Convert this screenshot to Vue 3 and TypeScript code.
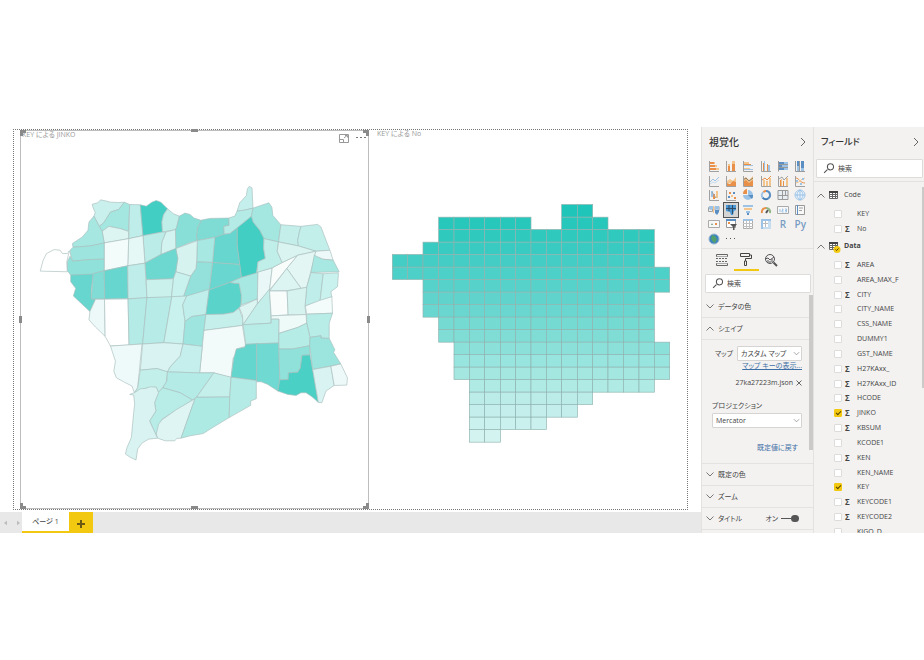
<script setup lang="ts">
import { reactive, ref } from 'vue'

type Shape = [d: string, fill: string, stroke?: string]
interface Field { name: string; sum: boolean; checked: boolean }

// Town areas of the shape map: fill colour and outline
const areas: [string, string][] = [
  ['#ffffff', '118,813 127,780 137,760 160,748 178,750 185,760 200,760 206,752 198,785 200,815'],
  ['#c9f0ec', '275,611 292,607 300,598 315,601 330,605 355,606 372,605 355,627 330,635 310,667 296,678 280,647 284,637 277,620'],
  ['#a4e7e0', '372,605 388,612 384,693 360,685 325,678 305,693 296,678 310,667 330,635 355,627'],
  ['#dcf5f3', '305,693 325,678 360,685 384,693 385,715 311,728'],
  ['#bfede9', '388,612 420,613 428,706 385,715'],
  ['#43cec4', '420,613 438,617 455,605 468,600 482,605 502,625 490,643 485,665 487,695 428,706'],
  ['#c0eee9', '502,625 520,640 538,647 530,680 526,688 487,695 485,665 490,643'],
  ['#88dfd8', '538,647 555,638 570,642 582,653 605,660 594,680 590,710 592,721 570,727 527,745 526,688 530,680'],
  ['#7fdcd4', '605,659 630,654 687,653 688,675 672,678 673,702 645,711 592,721 590,710 594,680'],
  ['#c5efec', '749,557 757,562 760,623 735,629 712,632 720,607 740,585 743,565'],
  ['#b5ebe6', '712,632 735,629 760,623 755,648 712,683 690,700 673,702 672,678 688,675 687,653 705,647'],
  ['#a4e7e0', '760,623 808,607 817,620 820,645 844,673 837,725 793,715 780,690 760,665 755,648'],
  ['#43cec4', '755,648 760,665 780,690 793,715 792,745 797,775 775,785 770,820 725,832 712,735 712,683'],
  ['#66d6ce', '645,711 673,702 690,700 712,683 712,735 720,793 638,787'],
  ['#a8e8e2', '592,721 645,711 638,787 590,785'],
  ['#69d7cf', '638,787 720,793 725,832 690,847 628,870'],
  ['#93e1da', '590,785 638,787 628,870 570,888 550,890 572,828 588,805'],
  ['#d6f3f0', '527,745 592,721 590,785 588,805 572,828 527,815 533,775'],
  ['#d3f3f0', '497,695 526,688 527,745 482,763 485,725'],
  ['#bbece7', '428,706 487,695 497,695 485,725 482,763 434,789'],
  ['#6dd8d0', '434,789 482,763 527,745 533,775 527,815 520,836 438,839'],
  ['#e6f8f6', '385,715 428,706 434,789 382,797'],
  ['#f4fcfb', '311,728 385,715 382,797 311,812'],
  ['#a7e7e2', '280,647 296,678 305,693 311,728 270,737 217,741 215,730 245,710 262,690 265,665'],
  ['#9de4de', '217,741 270,737 311,728 311,777 270,778 215,783 210,765 208,750'],
  ['#90e1da', '208,768 215,783 270,778 311,777 311,812 265,825 210,825 200,812 200,785'],
  ['#66d6ce', '210,825 278,822 272,870 272,897 285,898 268,935 218,888 225,865 210,845'],
  ['#80dcd5', '278,820 311,812 313,897 272,897'],
  ['#66d6ce', '311,812 382,797 383,896 313,897'],
  ['#bfede9', '382,797 434,789 440,894 383,896'],
  ['#cbf1ed', '438,839 520,836 514,892 440,894'],
  ['#c9f1ed', '527,815 572,828 550,890 514,892 520,836'],
  ['#ecf9f8', '285,898 312,898 314,1010 285,982 265,960 268,935'],
  ['#ffffff', '312,898 383,897 386,1036 330,1039 314,1010'],
  ['#b4ebe6', '383,897 440,893 427,1033 386,1035'],
  ['#b7ebe7', '440,893 515,890 491,1029 427,1033'],
  ['#c9f1ed', '515,890 560,888 548,915 555,965 549,1033 491,1029'],
  ['#c0eeea', '560,888 628,868 618,944 575,950 555,965 548,915'],
  ['#9ee5df', '555,965 575,950 618,944 612,992 607,1040 549,1033'],
  ['#5ad3ca', '628,870 690,847 705,850 718,850 725,885 723,920 700,938 670,943 618,944'],
  ['#a8e8e2', '690,847 725,832 775,817 773,897 725,915 725,885 718,850 705,850'],
  ['#c5efeb', '618,944 670,943 700,938 718,925 730,960 728,977 612,992'],
  ['#e9f8f7', '775,815 818,803 810,870 773,912'],
  ['#ddf5f2', '718,922 773,897 773,912 730,975 728,945'],
  ['#c3eeea', '810,867 815,970 730,975 773,912'],
  ['#f8fdfc', '818,803 848,787 895,765 862,805 810,870'],
  ['#c0eee9', '793,715 837,725 833,753 848,787 818,803 772,817 775,785 797,775 792,745'],
  ['#c3eeea', '844,673 905,678 900,695 895,720 897,737 837,725'],
  ['#c3efeb', '905,678 955,672 965,680 992,750 950,753 897,737 895,720 900,695'],
  ['#daf4f1', '837,725 897,737 950,753 895,765 848,787 833,753'],
  ['#e3f6f4', '895,765 950,753 945,775 922,862 905,865 862,805'],
  ['#edf9f8', '950,753 992,750 1002,780 970,777 945,768'],
  ['#a8e8e2', '945,765 970,777 1002,780 1020,815 935,817'],
  ['#bfede9', '935,817 972,821 962,905 917,918 922,862'],
  ['#c9f1ed', '972,821 1018,818 1015,860 995,875 998,892 962,905'],
  ['#ddf5f2', '862,805 905,865 863,872 810,873'],
  ['#f8fdfc', '810,873 863,873 866,945 815,948'],
  ['#d6f3f0', '863,873 922,862 917,920 920,945 866,945'],
  ['#f4fcfb', '918,918 960,902 998,890 1000,940 922,943'],
  ['#b7ece7', '922,943 1000,940 990,970 990,1016 965,1015 965,1008 932,1013 922,970'],
  ['#edfaf8', '815,948 920,944 922,970 895,983 838,1001 838,958 815,958'],
  ['#b7ece7', '730,975 815,970 815,958 838,958 837,1030 738,1034'],
  ['#b5ece6', '838,1001 895,983 922,970 932,1013 931,1038 880,1048 838,1048'],
  ['#f3fbfa', '612,992 728,977 738,1040 710,1048 707,1072 700,1075 694,1135 642,1120 599,1120'],
  ['#64d6cd', '710,1048 735,1043 738,1034 771,1032 771,1143 694,1133 702,1075'],
  ['#70d9d1', '771,1032 837,1030 841,1140 835,1175 805,1155 785,1147 771,1147'],
  ['#8fe1da', '838,1048 880,1048 931,1038 932,1066 908,1067 903,1105 895,1118 867,1120 866,1140 841,1141'],
  ['#4bd0c6', '932,1066 940,1110 957,1209 938,1192 920,1180 905,1180 890,1188 865,1185 835,1175 841,1141 866,1140 867,1120 895,1118 903,1105 908,1067'],
  ['#9ce4de', '932,1013 965,1008 965,1015 990,1016 1007,1050 1003,1058 1025,1093 940,1110 931,1038'],
  ['#d8f3f1', '940,1110 995,1100 1005,1158 980,1175 968,1210 957,1209'],
  ['#edf9f8', '995,1100 1025,1093 1045,1135 1043,1157 1005,1158'],
  ['#eefaf9', '330,1039 425,1033 412,1165 402,1180 395,1160 370,1147 348,1135 340,1115 345,1085'],
  ['#d8f3f1', '427,1033 491,1029 549,1033 540,1070 510,1102 502,1117 470,1107 420,1112'],
  ['#c3efeb', '420,1112 470,1107 502,1117 498,1150 475,1180 468,1163 435,1167 402,1180 412,1165'],
  ['#c5efec', '549,1033 607,1040 599,1120 590,1120 502,1117 510,1102 540,1070'],
  ['#b4ebe6', '502,1117 595,1120 642,1120 590,1193 578,1202 540,1180 488,1165 500,1145'],
  ['#b7ece7', '488,1165 540,1180 578,1202 485,1260 468,1310 448,1265 467,1235 463,1210 473,1180'],
  ['#dff5f3', '585,1198 543,1317 530,1318 524,1325 495,1325 472,1317 468,1305 475,1275 485,1262 530,1230'],
  ['#aeeae4', '590,1193 690,1192 688,1255 630,1290 610,1303 570,1310 543,1317 585,1198'],
  ['#c5efeb', '642,1120 694,1133 690,1192 590,1193'],
  ['#b4ebe6', '694,1133 770,1143 770,1198 753,1205 753,1218 688,1255 690,1192'],
  ['#d8f3f1', '402,1180 420,1168 435,1167 450,1162 468,1163 475,1180 463,1210 467,1235 448,1265 472,1317 445,1320 425,1332 412,1350 407,1383 390,1375 375,1365 380,1345 393,1315 400,1240 403,1215 400,1187 388,1185'],
]

// Tile map: colour of each row and its runs of columns [from, to)
const tileRows: [string, number[][]][] = [
  ['#1fc5b9', [[11, 13]]],
  ['#27c7bb', [[3, 9], [11, 14]]],
  ['#2fc9be', [[3, 17]]],
  ['#39cbc1', [[2, 17]]],
  ['#43cdc4', [[0, 17]]],
  ['#4dd0c7', [[0, 18]]],
  ['#57d2ca', [[2, 18]]],
  ['#60d4cc', [[2, 17]]],
  ['#69d7cf', [[2, 17]]],
  ['#75dad2', [[3, 17]]],
  ['#80ddd6', [[3, 17]]],
  ['#8ce0da', [[4, 18]]],
  ['#98e4de', [[4, 18]]],
  ['#a4e7e1', [[4, 18]]],
  ['#b0eae5', [[5, 17]]],
  ['#bbece8', [[5, 13]]],
  ['#c3eeeb', [[5, 12]]],
  ['#cbf1ee', [[5, 10]]],
  ['#d3f3f1', [[5, 7]]],
]
const tileX = (c: number) => Math.round(1177 + (c * 832) / 18)
const tileY = (r: number) => Math.round(614 + (r * 713) / 19)
const tiles = tileRows.flatMap(([fill, runs], r) =>
  runs.flatMap(([from, to]) =>
    Array.from({ length: to - from }, (_, i) => {
      const c = from + i
      return { x: tileX(c), y: tileY(r), w: tileX(c + 1) - tileX(c), h: tileY(r + 1) - tileY(r), fill }
    }),
  ),
)

const B = '#5b8fc4'
const L = '#9cc3e6'
const O = '#e8904a'
const Y = '#f3c58c'
const G = '#a0a0a0'
const axis = 'M1.5 1V11.5H11'
const visuals: { name: string; on?: boolean; text?: string; shapes: Shape[] }[] = [
  { name: '積み上げ横棒', shapes: [['M2 2h4v2H2zM2 5h5v2H2zM2 8h6v2H2z', O], ['M6 2h1v2H6zM7 5h2v2H7zM8 8h3v2H8z', Y], [axis, 'none', G]] },
  { name: '積み上げ縦棒', shapes: [['M3 6h2v5H3zM7 4h3v7H7z', O], ['M3 4h2v2H3zM7 1h3v3H7z', Y], [axis, 'none', G]] },
  { name: '集合横棒', shapes: [['M2 2h5v2H2zM2 8h6v1H2z', Y], ['M2 5h9v1H2zM2 9h9v1H2z', L], ['M2 4h7v1H2z', O], [axis, 'none', G]] },
  { name: '集合縦棒', shapes: [['M3 3h1v8H3zM7 4h1v7H7z', O], ['M4 1h1v10H4zM8 5h2v6H8z', L], [axis, 'none', G]] },
  { name: '100% 横棒', shapes: [['M2 2h5v2H2zM2 5h3v2H2zM2 8h5v2H2z', B], ['M7 2h4v2H7zM5 5h6v2H5zM7 8h4v2H7z', L], ['M1.5 1V11.5M2 4.5h9M2 7.5h9', 'none', '#999']] },
  { name: '100% 縦棒', shapes: [['M3 1h2v5H3zM7 1h3v7H7z', B], ['M3 6h2v5H3zM7 8h3v3H7z', L], ['M1.5 1V11.5H11M5.5 1v10', 'none', '#999']] },
  { name: '折れ線', shapes: [[axis, 'none', G], ['M2 7l3-3 2 2 4-4', 'none', L], ['M2 9l3-2 2 1 4-3', 'none', '#c6dcef']] },
  { name: '面', shapes: [['M2 6l3-2 3 2 3-4v6H2z', Y], ['M2 8l3 1 3-3 3 1v4H2z', O], [axis, 'none', G]] },
  { name: '積み上げ面', shapes: [['M1 4l3-2 3 3 4-4v10H1z', Y], ['M1 7l3-2 3 3 4-3v6H1z', O], ['M1 5l3-2 3 3 4-3', 'none', '#8b7d6b'], [axis, 'none', G]] },
  { name: '折れ線と積み上げ縦棒', shapes: [['M3 5h2v6H3zM6 6h2v5H6zM9 3h2v8H9z', Y], ['M2 5l3-2 2 2 4-4', 'none', O], [axis, 'none', G]] },
  { name: '折れ線と集合縦棒', shapes: [['M3 5h1v6H3zM6 6h1v5H6z', O], ['M4 4h1v7H4zM9 3h2v8H9z', Y], ['M2 4l3-2 2 3 4-4', 'none', G], [axis, 'none', G]] },
  { name: 'リボン', shapes: [['M2 3c3 0 4 5 9 5', 'none', O], ['M2 8c4 0 5-5 9-5', 'none', Y], ['M2 5h2v2H2zM8 3h2v2H8zM6 8h2v2H6z', L], [axis, 'none', G]] },
  { name: 'ウォーターフォール', shapes: [['M3 2h2v6H3z', L], ['M5 5h2v5H5z', O], ['M8 2h2v7H8z', Y], ['M1.5 1V11.5H11M4 3l4 6', 'none', G]] },
  { name: '散布図', shapes: [['M3 7h2v2H3zM8 3h2v2H8z', B], ['M4 3h2v2H4zM9 8h2v2H9z', O], ['M6 6h2v2H6z', Y], [axis, 'none', G]] },
  { name: '円', shapes: [['M6 1a5 5 0 1 1-5 5h5z', L], ['M6 6l4 4a5 5 0 0 0 1-4z', B], ['M5 0v5H1a5 5 0 0 1 4-5z', O]] },
  { name: 'ドーナツ', shapes: [['M6 2a4 4 0 0 1 2 7.5', 'none', B], ['M8 9.5a4 4 0 0 1-5.5-1', 'none', '#3f7ab5'], ['M2.5 8.5A4 4 0 0 1 3.5 3', 'none', L], ['M3.5 3A4 4 0 0 1 6 2', 'none', O]] },
  { name: 'ツリーマップ', shapes: [['M1 1.5h10v9H1z', '#e6edf3', '#999'], ['M5.5 1v10M1 6.500h10M8.5 1v5', 'none', '#999']] },
  { name: 'マップ', shapes: [['M6 1a5 5 0 1 0 .01 0', '#eaf3fa', L], ['M6 1v10M1 6h10M6 1c-4 3-4 7 0 10M6 1c4 3 4 7 0 10', 'none', L]] },
  { name: '塗り分け地図', shapes: [['M.5 3.500h4v4h-4zM7 2.500h4v4H7z', '#e8eef4', G], ['M1 2h4v3L3 6 1 5zM7 2h4v3L9 6 7 5z', L], ['M7 6h4v2L9 11 7 9z', B], ['M5.5 2v7', 'none', Y]] },
  { name: '図形マップ', on: true, shapes: [['M1 1h10v5l-2 1-1 4H6L5 8 1 7z', '#4b98d4'], ['M4 1v6M7.5 1v9M1 4.500h10', 'none', '#2f4b66']] },
  { name: 'じょうご', shapes: [['M1 1h10v2H1z', L], ['M2 4h8v2H2z', Y], ['M4 7h4v2H4z', L], ['M5 9h2v2H5z', B]] },
  { name: 'ゲージ', shapes: [['M2 9a4 4 0 0 1 4-5', 'none', O], ['M6 4a4 4 0 0 1 4 5', 'none', '#8fb583'], ['M6 9l2-3', 'none', '#555']] },
  { name: 'カード', shapes: [['M.5 2.500h11v7H.5z', '#f8f8f8', '#aaa'], ['M3 5v3M5 5h1v1.500H5V8h1.500M8 5h1.500v3H8M8 6.500h1', 'none', L]] },
  { name: '複数の行カード', shapes: [['M1.5 1.500h9v9h-9z', '#f8f8f8', '#999'], ['M3.5 1v10', 'none', B], ['M5 4h4M5 6.500h3', 'none', G]] },
  { name: 'KPI', shapes: [['M.5 2.500h11v7H.5z', '#f8f8f8', '#aaa'], ['M3 7l1-2 1 2z', '#5c9c70'], ['M7 5h2v2H7z', O]] },
  { name: 'スライサー', shapes: [['M1.5 1.500h9v8h-9z', '#fff', '#999'], ['M1 1h10v2H1z', B], ['M3 4h2v2H3z', O], ['M5 6h7L9.500 9v3H8V9z', '#555']] },
  { name: 'テーブル', shapes: [['M1.5 1.500h9v9h-9z', '#fff', '#aaa'], ['M1 1h10v2H1z', L], ['M1 5.500h10M1 8.500h10M4.500 2v9M7.500 2v9', 'none', '#c0c0c0']] },
  { name: 'マトリックス', shapes: [['M1.5 1.500h9v9h-9z', '#fff', '#aaa'], ['M1 1h10v2H1zM1 1h2v10H1z', L], ['M3 9h5v2H3zM8 3h3v8H8z', '#c6dcef'], ['M3 5.500h5M5.500 3v6', 'none', '#bbb']] },
  { name: 'R', text: 'R', shapes: [] },
  { name: 'Python', text: 'Py', shapes: [] },
  { name: 'ArcGIS', shapes: [['M6 1a5 5 0 1 0 .01 0', '#3c83c4', '#9db8cc'], ['M4 2l3 1 2 3-2 4-2-1-2-3z', '#53a06c']] },
  { name: 'その他', shapes: [['M1 5h1v1H1zM5 5h1v1H5zM9 5h1v1H9z', '#555']] },
]

const toField = (s: string): Field => ({ name: s.replace(/^[+]/, ''), sum: s[0] === '+', checked: s === '+JINKO' })
const tables = reactive([
  { name: 'Code', used: false, fields: ['KEY', '+No'].map(toField) },
  {
    name: 'Data',
    used: true,
    fields: ['+AREA', 'AREA_MAX_F', '+CITY', 'CITY_NAME', 'CSS_NAME', 'DUMMY1', 'GST_NAME', '+H27KAxx_', '+H27KAxx_ID', '+HCODE',
      '+JINKO', '+KBSUM', 'KCODE1', '+KEN', 'KEN_NAME', 'KEY', '+KEYCODE1', '+KEYCODE2', 'KIGO_D'].map(toField),
  },
])
tables[1].fields[15].checked = true

const mapKind = ref('カスタム マップ')
const projection = ref('Mercator')
const titleOn = ref(true)
</script>

<template>
  <div class="page">
    <main class="report">
      <div class="canvas">
        <section class="visual selected">
          <svg class="plot" viewBox="60 392 1047 1134" aria-hidden="true">
            <polygon v-for="(a, i) in areas" :key="i" :points="a[1]" :fill="a[0]" class="area" />
          </svg>
          <header class="visual-head">
            <h2>KEY による JINKO</h2>
            <div class="tools">
              <button type="button" aria-label="フォーカス モード">
                <svg width="10" height="9" viewBox="0 0 10 9"><path d="M.5.500h9v8h-9zM.5 5.500h4v3M5 4l3-2.500M6 1.500h2.500v2" fill="none" stroke="#999" /></svg>
              </button>
              <button type="button" aria-label="その他のオプション">
                <svg width="10" height="9" viewBox="0 0 10 9"><path d="M0 3h2v1H0zM4 3h2v1H4zM8 3h2v1H8z" fill="#777" /></svg>
              </button>
            </div>
          </header>
          <i v-for="h in ['nw', 'n', 'ne', 'e', 'se', 's', 'sw', 'w']" :key="h" class="handle" :class="h"></i>
        </section>
        <section class="visual">
          <svg class="plot" viewBox="1107 392 954 1134" aria-hidden="true">
            <rect v-for="(t, i) in tiles" :key="i" :x="t.x" :y="t.y" :width="t.w" :height="t.h" :fill="t.fill" class="tile" />
          </svg>
          <header class="visual-head"><h2>KEY による No</h2></header>
        </section>
      </div>
      <nav class="pages">
        <button type="button" class="step" aria-label="前へ"><svg width="3" height="6" viewBox="0 0 4 6"><path d="M4 0v6L0 3z" fill="#bbb" /></svg></button>
        <button type="button" class="step" aria-label="次へ"><svg width="3" height="6" viewBox="0 0 4 6"><path d="M0 0v6l4-3z" fill="#bbb" /></svg></button>
        <button type="button" class="tab">ページ 1</button>
        <button type="button" class="add" aria-label="ページの追加"><svg width="8" height="8" viewBox="0 0 8 8"><path d="M4 0v8M0 4h8" stroke="#6b5a14" stroke-width="2" /></svg></button>
      </nav>
    </main>

    <aside class="pane viz">
      <header class="pane-head"><h1>視覚化</h1><svg class="chev" viewBox="0 0 6 10"><path d="M1 1l4 4-4 4" /></svg></header>
      <div class="gallery">
        <button v-for="v in visuals" :key="v.name" type="button" :class="{ on: v.on }" :aria-label="v.name">
          <span v-if="v.text">{{ v.text }}</span>
          <svg v-else width="12" height="12" viewBox="0 0 12 12"><path v-for="(s, i) in v.shapes" :key="i" :d="s[0]" :fill="s[1]" :stroke="s[2] || 'none'" :stroke-width="v.name === 'ドーナツ' || v.name === 'ゲージ' ? 2 : 1" /></svg>
        </button>
      </div>
      <div class="modes">
        <button type="button" aria-label="フィールド">
          <svg width="14" height="14" viewBox="0 0 14 14" fill="none" stroke="#666"><path d="M1.5 4V1.500h11V4M1.500 10v2.500h11V10" /><path d="M1 5.500h12M1 8.500h12" stroke-dasharray="2 1" /><path d="M1.5 3.500h11M1.500 10.500h11" stroke="#aaa" /></svg>
        </button>
        <button type="button" class="on" aria-label="書式">
          <svg width="14" height="14" viewBox="0 0 14 14" fill="none" stroke="#444"><path d="M1.5 1.500h9v3h-9zM10.500 3h2v3.500h-6V9M5.500 9h2v4.500h-2z" /></svg>
        </button>
        <button type="button" aria-label="分析">
          <svg width="14" height="14" viewBox="0 0 14 14" fill="none" stroke="#555"><circle cx="6" cy="6" r="4.500" /><path d="M1 6l3-1 2 2 4-3M4 7v3M6 8v2M8 6v3" /><path d="M9.5 9.500L13 13" stroke-width="2" /></svg>
        </button>
      </div>
      <label class="search"><svg width="11" height="11" viewBox="0 0 10 10"><path d="M1 9l3-3M4 3.500a2.800 2.800 0 1 0 5.600 0a2.800 2.800 0 1 0-5.600 0" /></svg><input type="text" placeholder="検索" aria-label="検索" /></label>
      <div class="format">
        <button type="button" class="group"><svg class="caret" viewBox="0 0 8 5"><path d="M.5.500l3.500 3.500 3.500-3.500" /></svg>データの色</button>
        <section class="shape">
          <button type="button" class="group"><svg class="caret" viewBox="0 0 8 5"><path d="M.5 4.500l3.500-3.500 3.500 3.500" /></svg>シェイプ</button>
          <div class="line"><label for="map-kind">マップ</label>
            <span class="pick short"><select id="map-kind" v-model="mapKind"><option>カスタム マップ</option></select><svg class="caret" viewBox="0 0 8 5"><path d="M1 1l3 3 3-3" /></svg></span>
          </div>
          <a class="keys" href="#">マップ キーの表示...</a>
          <div class="file">27ka27223m.json<button type="button" aria-label="削除"><svg width="6" height="6" viewBox="0 0 6 6"><path d="M.5.500l5 5M5.500.500l-5 5" stroke="#666" /></svg></button></div>
          <label class="plabel" for="projection">プロジェクション</label>
          <span class="pick"><select id="projection" v-model="projection"><option>Mercator</option></select><svg class="caret" viewBox="0 0 8 5"><path d="M1 1l3 3 3-3" /></svg></span>
          <a class="reset" href="#">既定値に戻す</a>
        </section>
        <button type="button" class="group"><svg class="caret" viewBox="0 0 8 5"><path d="M.5.500l3.500 3.500 3.500-3.500" /></svg>既定の色</button>
        <button type="button" class="group"><svg class="caret" viewBox="0 0 8 5"><path d="M.5.500l3.500 3.500 3.500-3.500" /></svg>ズーム</button>
        <div class="group"><svg class="caret" viewBox="0 0 8 5"><path d="M.5.500l3.500 3.500 3.500-3.500" /></svg>タイトル
          <label class="switch">オン<input v-model="titleOn" type="checkbox" /></label>
        </div>
        <i class="thumb"></i>
      </div>
    </aside>

    <aside class="pane data">
      <header class="pane-head"><h1>フィールド</h1><svg class="chev" viewBox="0 0 6 10"><path d="M1 1l4 4-4 4" /></svg></header>
      <label class="search"><svg width="11" height="11" viewBox="0 0 10 10"><path d="M1 9l3-3M4 3.500a2.800 2.800 0 1 0 5.600 0a2.800 2.800 0 1 0-5.600 0" /></svg><input type="text" placeholder="検索" aria-label="フィールドの検索" /></label>
      <div class="tree">
        <section v-for="t in tables" :key="t.name">
          <button type="button" class="table" :class="{ used: t.used }">
            <svg class="caret" viewBox="0 0 8 5"><path d="M.5 4.500l3.500-3.500 3.500 3.500" /></svg>
            <svg width="13" height="13" viewBox="0 0 13 13">
              <path d="M1.5 2.500h8v7h-8zM1 5.500h9M1 7.500h9M4.500 3v7M7.500 3v7" fill="#fff" stroke="#666" /><path d="M1 2h9v2H1z" fill="#444" />
              <template v-if="t.used"><circle cx="9" cy="9.500" r="3.500" fill="#f2c811" /><path d="M7.5 9.500l1 1 2-2" fill="none" stroke="#554400" /></template>
            </svg>
            {{ t.name }}
          </button>
          <ul>
            <li v-for="f in t.fields" :key="f.name"><label><input v-model="f.checked" type="checkbox" /><span class="sum">{{ f.sum ? 'Σ' : '' }}</span>{{ f.name }}</label></li>
          </ul>
        </section>
        <i class="thumb"></i>
      </div>
    </aside>
  </div>
</template>

<style>
body { margin: 0; background: #fff; }
</style>

<style scoped>
.page { box-sizing: border-box; height: 100vh; padding: 127px 0; display: flex; font: 7px/10px "Open Sans", "Noto Sans CJK JP", sans-serif; font-feature-settings: "palt"; color: #444; }
.page * { box-sizing: border-box; }
button, input, select { font: inherit; font-feature-settings: inherit; color: inherit; margin: 0; padding: 0; border: 0; background: none; }
button { display: flex; align-items: center; justify-content: center; }
h1, h2, ul { margin: 0; padding: 0; list-style: none; font-weight: 400; }
svg { flex: none; }
.report { flex: 1; min-width: 0; display: flex; flex-direction: column; }
.canvas { flex: 1; min-height: 0; margin: 2px 13px 2px; padding-left: 6px; border: 1px dotted #777; display: grid; grid-template-columns: 349fr 318fr; }
.visual { position: relative; min-height: 0; display: grid; }
.selected { border: 1px solid #bdbdbd; }
.plot { grid-area: 1 / 1; width: 100%; height: 100%; min-height: 0; }
.area { stroke: #a9bfbd; stroke-width: 2; stroke-linejoin: round; }
.tile { stroke: #8fb3b0; stroke-width: 2; }
.visual-head { grid-area: 1 / 1; align-self: start; display: flex; justify-content: space-between; padding: 0 2px 0 1px; }
.visual:not(.selected) .visual-head { padding: 0 8px; }
h2 { font-size: 7px; line-height: 8px; color: #999; }
.tools { display: flex; gap: 7px; padding-top: 3px; }
.handle { position: absolute; background: #8a8a8a; }
.n, .s { left: 49%; width: 7px; height: 3px; }
.e, .w { top: 49%; width: 3px; height: 7px; }
.n { top: -2px; } .s { bottom: -1px; } .w { left: -2px; } .e { right: -2px; }
.nw, .ne, .sw, .se { width: 6px; height: 6px; background: none; border: 0 solid #8a8a8a; }
.nw { top: -1px; left: -1px; border-width: 3px 0 0 3px; }
.ne { top: -1px; right: -1px; border-width: 3px 3px 0 0; }
.sw { bottom: -1px; left: -1px; border-width: 0 0 3px 3px; }
.se { bottom: -1px; right: -1px; border-width: 0 3px 3px 0; }
.pages { height: 21px; display: flex; background: #e8e8e8; padding-left: 3px; }
.step { width: 5px; margin-right: 8px; }
.step + .step { margin-right: 1px; }
.tab { width: 47px; background: #fff; border-bottom: 2px solid #f2c811; font-weight: 500; }
.add { width: 24px; background: #f2c811; padding-top: 2px; }

.pane { background: #f3f2f1; border-left: 1px solid #e3e2e1; overflow: hidden; display: flex; flex-direction: column; }
.viz { width: 112px; }
.data { width: 111px; }
.pane-head { flex: none; height: 30px; padding: 0 7px 0 7px; display: flex; align-items: center; justify-content: space-between; }
h1 { font-size: 10px; line-height: 14px; font-weight: 500; color: #333; }
.data h1 { font-size: 9px; }
.data .pane-head { padding-right: 5px; }
.chev { width: 6px; height: 10px; fill: none; stroke: #666; }
.gallery { flex: none; height: 92px; padding: 2px 4px 2px 3px; display: grid; grid-template-columns: repeat(6, 1fr); grid-template-rows: repeat(6, 1fr); border-bottom: 1px solid #e3e2e1; }
.gallery button { min-width: 0; min-height: 0; justify-self: center; width: 14px; }
.gallery .on { outline: 1px solid #555; background: #d5d5d5; }
.gallery span { font-size: 10px; font-weight: 600; color: #7a9cc4; }
.modes { flex: none; height: 22px; padding: 0 30px 0 8px; display: grid; grid-template-columns: repeat(3, 1fr); }
.modes .on { border-bottom: 2px solid #f2c811; }
.search { flex: none; height: 19px; margin: 3px 2px 0 3px; padding-left: 6px; display: flex; align-items: center; gap: 4px; background: #fff; border: 1px solid #dddcdb; border-radius: 1px; }
.search svg { fill: none; stroke: #555; }
.search input { min-width: 0; width: 100%; outline: 0; }
.search input::placeholder { color: #444; opacity: 1; }
.format { position: relative; flex: 1; min-height: 0; padding-top: 3px; }
.group { width: 100%; height: 22px; padding-left: 4px; display: flex; align-items: center; justify-content: flex-start; gap: 4px; border-bottom: 1px solid #e3e2e1; }
.caret { width: 8px; height: 5px; fill: none; stroke: #777; }
.shape { display: flex; flex-direction: column; padding-right: 11px; height: 146px; border-bottom: 1px solid #e3e2e1; }
.shape .group { width: 111px; }
.line { display: flex; justify-content: flex-end; align-items: center; gap: 4px; margin-top: 6px; }
.pick { position: relative; display: flex; height: 15px; margin-left: 10px; }
.short { width: 65px; margin-left: 0; }
.pick select { appearance: none; width: 100%; padding-left: 3px; background: #fff; border: 1px solid #d5d4d3; border-radius: 1px; }
.pick .caret { position: absolute; right: 2px; top: 5px; width: 7px; pointer-events: none; stroke: #999; }
a { color: #3d6ea5; }
.keys { align-self: flex-end; }
.file { display: flex; justify-content: flex-end; gap: 3px; margin-top: 7px; }
.plabel { margin: 13px 0 2px 10px; }
.reset { align-self: flex-end; margin: 15px 4px 0 0; text-decoration: none; }
.switch { margin-left: auto; margin-right: 14px; display: flex; align-items: center; gap: 3px; }
.switch input { appearance: none; width: 18px; height: 7px; display: flex; align-items: center; justify-content: flex-end; }
.switch input::before { content: ""; flex: 1; height: 1px; background: #555; }
.switch input::after { content: ""; width: 8px; height: 7px; border-radius: 4px; background: #555; }
.format .thumb { position: absolute; right: 0; top: 2px; width: 4px; height: 155px; background: #cbcac9; }

.data .search { margin-right: 1px; margin-top: 2px; margin-left: 2px; }
.tree { position: relative; flex: 1; min-height: 0; margin-top: 3px; padding-top: 4px; border-top: 1px solid #e3e2e1; }
.tree .thumb { position: absolute; right: 0; top: 5px; width: 2px; height: 201px; background: #cbcac9; }
.table { height: 18px; padding-left: 3px; gap: 3px; }
.table.used { font-weight: 700; }
ul { padding: 2px 0 1px 20px; }
li { height: 15px; }
section:last-of-type li:nth-child(6n + 4) { height: 14px; }
li label { display: flex; align-items: center; height: 100%; }
li input { appearance: none; width: 8px; height: 8px; background: #fff; border: 1px solid #dddcdb; border-radius: 1px; display: flex; justify-content: center; }
li input:checked { background: #f2c811; border-color: #f2c811; }
li input:checked::before { content: ""; width: 2px; height: 4px; border: solid #554400; border-width: 0 1px 1px 0; transform: rotate(45deg); }
.sum { width: 15px; padding-left: 3px; font-size: 8px; font-weight: 700; }
</style>
